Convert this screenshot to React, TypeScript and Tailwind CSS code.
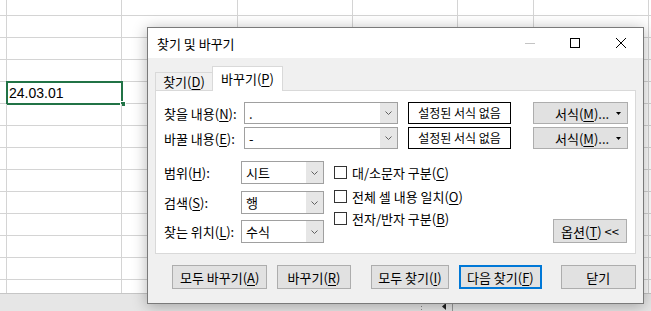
import React from "react";

const K = "font-['Noto_Sans_CJK_KR','Noto_Sans',sans-serif]";

const colClasses = [
  "w-[7px]",
  "w-[115px]",
  "w-[116px]",
  "w-[115px]",
  "w-[105px]",
  "w-[76px]",
  "w-[115px]",
  "w-[10px]",
];

function Key({ children }: { children: React.ReactNode }) {
  return <span className="underline underline-offset-[2px]">{children}</span>;
}

function Chevron() {
  return (
    <svg width="7" height="4" viewBox="0 0 7 4">
      <path d="M0.5 0.5 L3.5 3.5 L6.5 0.5" fill="none" stroke="#606060" strokeWidth="1" />
    </svg>
  );
}

function Combo({ value, className }: { value: string; className: string }) {
  return (
    <div className={`flex border border-[#a0a0a0] bg-white ${className}`}>
      <div className="flex flex-1 items-center pl-[4px]">{value}</div>
      <div className="flex w-[17px] items-center justify-center bg-[#e6e6e6]">
        <Chevron />
      </div>
    </div>
  );
}

function Btn({
  children,
  className,
}: {
  children: React.ReactNode;
  className: string;
}) {
  return (
    <div
      className={`flex items-center justify-center border border-[#adadad] bg-[#e1e1e1] ${className}`}
    >
      {children}
    </div>
  );
}

function Check({ children, className = "" }: { children: React.ReactNode; className?: string }) {
  return (
    <div className={`flex h-[13px] items-center gap-[5px] ${className}`}>
      <div className="h-[13px] w-[13px] shrink-0 border border-[#333333] bg-white" />
      <span className="whitespace-nowrap">{children}</span>
    </div>
  );
}

function Sheet() {
  const rows = Array.from({ length: 13 }, (_, i) => i);
  return (
    <div className="flex h-full flex-col">
      {rows.map((i) => (
        <div
          key={i}
          className={`flex shrink-0 border-b border-[#d4d4d4] ${i === 0 ? "h-[16px]" : "h-[22px]"}`}
        >
          {colClasses.map((w, j) => (
            <div key={j} className={`relative shrink-0 border-r border-[#d4d4d4] ${w}`}>
              {i === 4 && j === 1 && (
                <>
                  <div className="flex h-full items-center pl-[2px] pt-[2px] font-['Liberation_Sans',sans-serif] text-[14px] text-black">
                    24.03.01
                  </div>
                  <div className="absolute -bottom-[2px] -left-[1px] -right-[2px] -top-[1px] border-2 border-[#217346]" />
                  <div className="absolute -bottom-[4px] -right-[5px] h-[6px] w-[6px] border border-white bg-[#217346]" />
                </>
              )}
            </div>
          ))}
        </div>
      ))}
      <div className="flex h-[13px] shrink-0">
        {colClasses.map((w, j) => (
          <div key={j} className={`shrink-0 border-r border-[#d4d4d4] ${w}`} />
        ))}
      </div>
      <div className="flex flex-1 items-start border-t border-[#c6c6c6] bg-[#e6e6e6] pl-[420px] pt-[8px]">
        <svg width="3" height="9" viewBox="0 0 3 9">
          <rect x="1" y="1" width="1" height="1" fill="#8a8a8a" />
          <rect x="1" y="4" width="1" height="1" fill="#8a8a8a" />
          <rect x="1" y="7" width="1" height="1" fill="#8a8a8a" />
        </svg>
        <svg className="ml-[19px]" width="5" height="9" viewBox="0 0 5 9">
          <path d="M4 1 L0 4.5 L4 8 Z" fill="#222222" />
        </svg>
        <div className="ml-[5px] h-[12px] w-px bg-[#9a9a9a]" />
      </div>
    </div>
  );
}

function FormatBtn() {
  return (
    <Btn className="ml-[22px] h-full w-[95px] !justify-start pl-[21px] pr-[6px]">
      <span className="whitespace-nowrap">
        서식(<Key>M</Key>)...
      </span>
      <svg className="ml-auto shrink-0" width="5" height="3" viewBox="0 0 5 3">
        <path d="M0 0 L5 0 L2.5 3 Z" fill="#000" />
      </svg>
    </Btn>
  );
}

function NoFormat() {
  return (
    <div className="ml-[10px] flex h-full w-[103px] items-center justify-center border border-black text-[12px]">
      설정된 서식 없음
    </div>
  );
}

function Dialog() {
  return (
    <div
      className={`absolute left-[147px] top-[27px] flex h-[277px] w-[497px] flex-col border border-[#7a7a7a] bg-[#f0f0f0] text-[13px] leading-none text-black shadow-[0_2px_14px_rgba(0,0,0,0.3)] ${K}`}
    >
      {/* title bar */}
      <div className="flex h-[30px] shrink-0 items-center bg-white">
        <div className="flex-1 pl-[9px]">찾기 및 바꾸기</div>
        <svg width="10" height="1" viewBox="0 0 10 1">
          <rect width="10" height="1" fill="#c4c4c4" />
        </svg>
        <svg className="ml-[35px]" width="10" height="10" viewBox="0 0 10 10">
          <rect x="0.5" y="0.5" width="9" height="9" fill="none" stroke="#000" strokeWidth="1" />
        </svg>
        <svg className="ml-[36px] mr-[17px]" width="10" height="10" viewBox="0 0 10 10">
          <path d="M0 0 L10 10 M10 0 L0 10" stroke="#000" strokeWidth="1" />
        </svg>
      </div>

      {/* body */}
      <div className="flex flex-1 flex-col px-[7px] pt-[8px]">
        <div className="flex h-[24px] items-end">
          <div className="flex h-[18px] w-[57px] items-center justify-center border-l border-t border-[#d9d9d9] whitespace-nowrap">
            찾기(<Key>D</Key>)
          </div>
          <div className="relative z-10 -mb-px flex h-[25px] w-[71px] items-center justify-center border-x border-t border-[#d9d9d9] bg-white pb-[2px] whitespace-nowrap">
            바꾸기(<Key>P</Key>)
          </div>
        </div>

        <div className="flex h-[164px] w-[481px] flex-col border border-[#d9d9d9] bg-white pl-[8px] pt-[11px]">
          <div className="flex h-[22px] items-center">
            <div className="w-[80px] whitespace-nowrap">
              찾을 내용(<Key>N</Key>):
            </div>
            <Combo value="." className="h-full w-[154px]" />
            <NoFormat />
            <FormatBtn />
          </div>
          <div className="mt-[3px] flex h-[22px] items-center">
            <div className="w-[80px] whitespace-nowrap">
              바꿀 내용(<Key>E</Key>):
            </div>
            <Combo value="-" className="h-full w-[154px]" />
            <NoFormat />
            <FormatBtn />
          </div>

          <div className="mt-[12px] flex">
            <div className="flex flex-col">
              <div className="flex h-[23px] items-center">
                <div className="w-[77px] whitespace-nowrap">
                  범위(<Key>H</Key>):
                </div>
                <Combo value="시트" className="h-full w-[83px]" />
              </div>
              <div className="mt-[7px] flex h-[23px] items-center">
                <div className="w-[77px] whitespace-nowrap">
                  검색(<Key>S</Key>):
                </div>
                <Combo value="행" className="h-full w-[83px]" />
              </div>
              <div className="mt-[6px] flex h-[23px] items-center">
                <div className="w-[77px] whitespace-nowrap">
                  찾는 위치(<Key>L</Key>):
                </div>
                <Combo value="수식" className="h-full w-[83px]" />
              </div>
            </div>

            <div className="ml-[10px] flex flex-col pt-[5px]">
              <Check>
                대/소문자 구분(<Key>C</Key>)
              </Check>
              <Check className="mt-[11px]">
                전체 셀 내용 일치(<Key>O</Key>)
              </Check>
              <Check className="mt-[9px]">
                전자/반자 구분(<Key>B</Key>)
              </Check>
            </div>

            <Btn className="ml-auto mr-[8px] h-[24px] w-[74px] self-end whitespace-nowrap">
              옵션(<Key>T</Key>)&nbsp;&lt;&lt;
            </Btn>
          </div>
        </div>

        <div className="ml-[17px] mt-[11px] flex whitespace-nowrap">
          <Btn className="h-[24px] w-[96px]">
            모두 바꾸기(<Key>A</Key>)
          </Btn>
          <Btn className="ml-[10px] h-[24px] w-[74px]">
            바꾸기(<Key>R</Key>)
          </Btn>
          <Btn className="ml-[20px] h-[24px] w-[79px]">
            모두 찾기(<Key>I</Key>)
          </Btn>
          <Btn className="ml-[10px] h-[24px] w-[83px] !border-2 !border-[#0078d7]">
            다음 찾기(<Key>F</Key>)
          </Btn>
          <Btn className="ml-[19px] h-[24px] w-[76px]">닫기</Btn>
        </div>
      </div>
    </div>
  );
}

export default function App() {
  return (
    <div className="relative h-[311px] w-[651px] overflow-hidden bg-white">
      <Sheet />
      <Dialog />
    </div>
  );
}
